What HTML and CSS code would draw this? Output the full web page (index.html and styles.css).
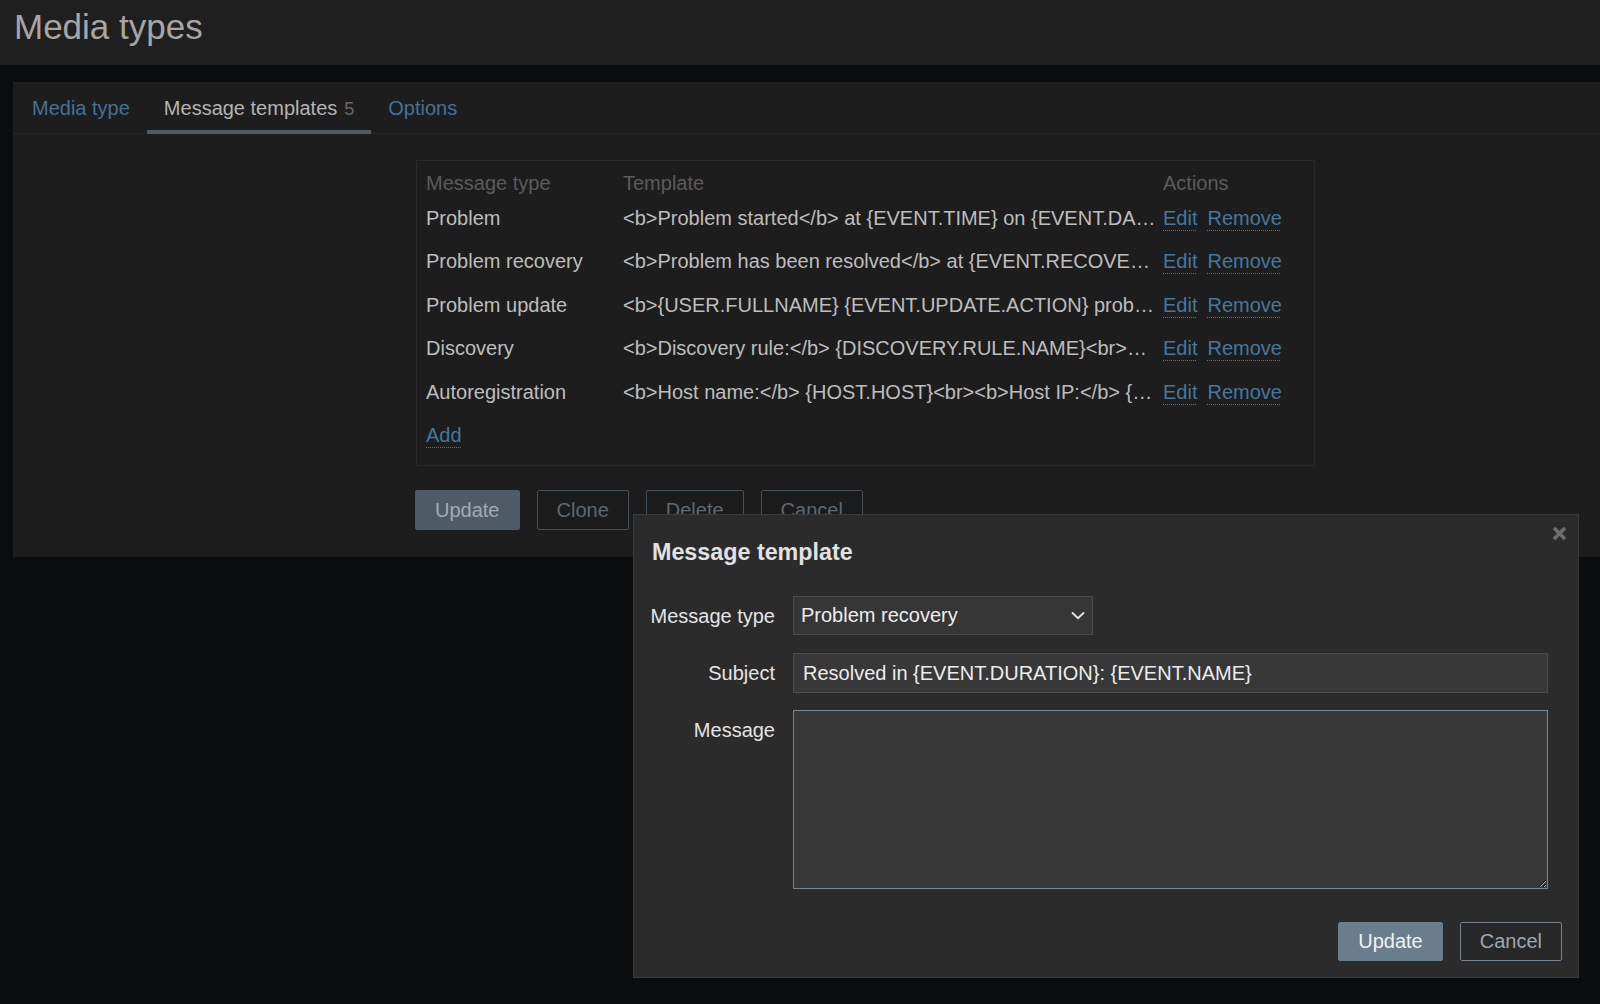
FILE: index.html
```html
<!DOCTYPE html>
<html lang="en">
<head>
<meta charset="utf-8">
<title>Media types</title>
<link rel="stylesheet" href="styles.css">
</head>
<body>
<header class="page-header">
  <h1 class="page-title">Media types</h1>
</header>
<main class="page-body">
  <section class="panel">
    <nav class="tabs">
      <a class="tab tab-link">Media type</a>
      <span class="tab tab-active">Message templates<span class="tab-count">5</span></span>
      <a class="tab tab-link">Options</a>
    </nav>
    <div class="panel-content">
      <div class="templates-box">
        <table class="templates">
          <colgroup>
            <col class="col-type">
            <col class="col-template">
            <col class="col-actions">
          </colgroup>
          <thead>
            <tr><th>Message type</th><th>Template</th><th>Actions</th></tr>
          </thead>
          <tbody>
            <tr>
              <td>Problem</td>
              <td class="tpl">&lt;b&gt;Problem started&lt;/b&gt; at {EVENT.TIME} on {EVENT.DA…</td>
              <td class="acts"><a class="link">Edit</a><a class="link">Remove</a></td>
            </tr>
            <tr>
              <td>Problem recovery</td>
              <td class="tpl">&lt;b&gt;Problem has been resolved&lt;/b&gt; at {EVENT.RECOVE…</td>
              <td class="acts"><a class="link">Edit</a><a class="link">Remove</a></td>
            </tr>
            <tr>
              <td>Problem update</td>
              <td class="tpl">&lt;b&gt;{USER.FULLNAME} {EVENT.UPDATE.ACTION} prob…</td>
              <td class="acts"><a class="link">Edit</a><a class="link">Remove</a></td>
            </tr>
            <tr>
              <td>Discovery</td>
              <td class="tpl">&lt;b&gt;Discovery rule:&lt;/b&gt; {DISCOVERY.RULE.NAME}&lt;br&gt;…</td>
              <td class="acts"><a class="link">Edit</a><a class="link">Remove</a></td>
            </tr>
            <tr>
              <td>Autoregistration</td>
              <td class="tpl">&lt;b&gt;Host name:&lt;/b&gt; {HOST.HOST}&lt;br&gt;&lt;b&gt;Host IP:&lt;/b&gt; {…</td>
              <td class="acts"><a class="link">Edit</a><a class="link">Remove</a></td>
            </tr>
          </tbody>
          <tfoot>
            <tr><td colspan="3"><a class="link">Add</a></td></tr>
          </tfoot>
        </table>
      </div>
      <div class="form-actions">
        <button class="btn btn-primary-dim">Update</button>
        <button class="btn btn-alt-dim">Clone</button>
        <button class="btn btn-alt-dim">Delete</button>
        <button class="btn btn-alt-dim">Cancel</button>
      </div>
    </div>
  </section>
</main>

<div class="modal">
  <button class="modal-close" aria-label="Close">
    <svg width="15" height="15" viewBox="0 0 15 15"><path d="M2 2 L13 13 M13 2 L2 13" stroke="#6e6e6e" stroke-width="3.4" stroke-linecap="butt"/></svg>
  </button>
  <h2 class="modal-title">Message template</h2>
  <div class="modal-form">
    <label class="form-label">Message type</label>
    <div class="select">
      <span class="select-value">Problem recovery</span>
      <svg class="select-arrow" width="14" height="9" viewBox="0 0 14 9"><path d="M1 1.5 L7 7.2 L13 1.5" fill="none" stroke="#e6e6e6" stroke-width="1.8"/></svg>
    </div>
    <label class="form-label">Subject</label>
    <input class="text-input" type="text" value="Resolved in {EVENT.DURATION}: {EVENT.NAME}">
    <label class="form-label">Message</label>
    <textarea class="text-area"></textarea>
  </div>
  <div class="modal-footer">
    <button class="btn btn-primary">Update</button>
    <button class="btn btn-alt">Cancel</button>
  </div>
</div>
</body>
</html>
```
FILE: styles.css
```css
* { box-sizing: border-box; }

html, body {
  margin: 0;
  padding: 0;
}

body {
  width: 1600px;
  height: 1004px;
  overflow: hidden;
  background: #0b0c0e;
  font-family: "Liberation Sans", Arial, sans-serif;
  font-size: 20px;
  color: #c3c3c3;
  position: relative;
}

.page-header {
  height: 65px;
  background: #1f1f1f;
  padding: 9px 0 0 14px;
}

.page-title {
  margin: 0;
  font-size: 35px;
  line-height: 35px;
  font-weight: normal;
  color: #a6a6a6;
}

.page-body {
  padding: 17px 0 0 13px;
}

.panel {
  background: #1d1d1d;
  height: 475px;
}

.tabs {
  display: flex;
  padding-left: 2px;
  border-bottom: 1px solid #262626;
  height: 52px;
}

.tab {
  display: block;
  padding: 14px 17px 0;
  line-height: 24px;
  height: 52px;
  border-bottom: 4px solid transparent;
  white-space: nowrap;
}

.tab-link {
  color: #42729a;
}

.tab-active {
  color: #b4b4b4;
  border-bottom-color: #505b65;
}

.tab-count {
  font-size: 18px;
  color: #686868;
  margin-left: 7px;
}

.panel-content {
  padding: 26px 0 0 403px;
}

.templates-box {
  width: 899px;
  border: 1px solid #2a2a2a;
  padding: 0 9px 8px;
}

.templates {
  width: 879px;
  border-collapse: collapse;
  table-layout: fixed;
}

.col-type { width: 197px; }
.col-template { width: 540px; }
.col-actions { width: 142px; }

.templates th {
  text-align: left;
  font-weight: normal;
  color: #5b5b5b;
  padding: 10px 0 0;
  line-height: 24px;
  height: 35px;
  vertical-align: top;
}

.templates td {
  height: 43.5px;
  line-height: 24px;
  padding: 0;
  vertical-align: middle;
  white-space: nowrap;
  overflow: hidden;
  color: #bdbdbd;
}

.templates td.tpl {
  overflow: visible;
}

.acts .link + .link {
  margin-left: 10px;
}

.link {
  color: #44789f;
  text-decoration: underline dotted 1px;
  text-underline-offset: 5px;
  cursor: pointer;
}

.form-actions {
  display: flex;
  gap: 17px;
  margin-top: 24px;
  margin-left: -1px;
}

.btn {
  font-family: "Liberation Sans", Arial, sans-serif;
  font-size: 20px;
  height: 40px;
  padding: 0 19px;
  border-radius: 2px;
  border: 1px solid transparent;
  background: transparent;
  line-height: 38px;
  cursor: pointer;
}

.btn-primary-dim {
  background: #4e5a65;
  border-color: #4e5a65;
  color: #a3abb1;
}

.btn-alt-dim {
  border-color: #44505a;
  color: #5d6973;
  background: #1b1b1b;
}

/* Modal */
.modal {
  position: absolute;
  left: 633px;
  top: 514px;
  width: 946px;
  height: 464px;
  background: #2b2b2b;
  border: 1px solid #3a3a3a;
  padding: 24px 16px 17px 12px;
}

.modal-close {
  position: absolute;
  right: 11px;
  top: 11px;
  width: 15px;
  height: 15px;
  padding: 0;
  border: 0;
  background: transparent;
  display: block;
}

.modal-close svg { display: block; }

.modal-title {
  margin: 0 0 0 6px;
  font-size: 23.3px;
  line-height: 26px;
  font-weight: bold;
  color: #e2e2e2;
}

.modal-form {
  margin-top: 31px;
  display: grid;
  grid-template-columns: 129px 755px;
  column-gap: 18px;
  row-gap: 17px;
  align-items: start;
}

.form-label {
  text-align: right;
  line-height: 40px;
  color: #e4e4e4;
  white-space: nowrap;
}

.select {
  width: 300px;
  height: 39px;
  background: #363636;
  border: 1px solid #4a4a4a;
  display: flex;
  align-items: center;
  justify-content: space-between;
  padding: 0 7px 0 7px;
  color: #ececec;
}

.select-arrow {
  display: block;
}

.text-input {
  width: 755px;
  height: 40px;
  background: #383838;
  border: 1px solid #4c4c4c;
  padding: 0 9px;
  font-family: "Liberation Sans", Arial, sans-serif;
  font-size: 20px;
  color: #ececec;
  outline: none;
}

.text-area {
  width: 755px;
  height: 179px;
  background: #383838;
  border: 1px solid #75889a;
  font-family: "Liberation Sans", Arial, sans-serif;
  font-size: 20px;
  color: #ececec;
  outline: none;
  resize: both;
  display: block;
  color-scheme: dark;
}

.modal-footer {
  display: flex;
  justify-content: flex-end;
  gap: 17px;
  margin-top: 33px;
}

.modal-footer .btn {
  height: 39px;
  line-height: 37px;
}

.btn-primary {
  background: #6a7d8c;
  border-color: #6a7d8c;
  color: #f2f2f2;
}

.btn-alt {
  background: #272727;
  border-color: #76848f;
  color: #9ea8b0;
}
```
